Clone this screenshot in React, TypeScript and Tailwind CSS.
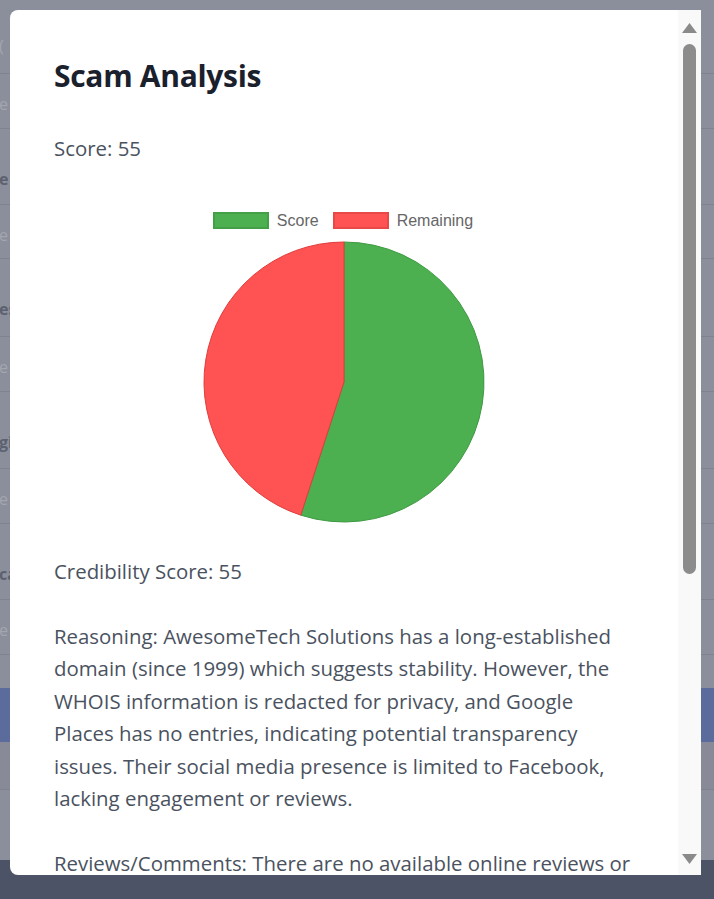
import React from "react";

// page behind the dialog (dimmed already)
const rows = [
  { h: 74, text: "(", tone: "light", top: 36 },
  { h: 55, text: "e", tone: "light", top: 20 },
  { h: 76, text: "e", tone: "bold", top: 40 },
  { h: 54, text: "e", tone: "light", top: 20 },
  { h: 78, text: "es", tone: "bold", top: 40 },
  { h: 55, text: "e", tone: "light", top: 20 },
  { h: 77, text: "gi", tone: "bold", top: 40 },
  { h: 55, text: "e", tone: "light", top: 20 },
  { h: 76, text: "ca", tone: "bold", top: 40 },
  { h: 55, text: "e", tone: "light", top: 20 },
];

function Pie() {
  // 55% score, drawn clockwise from the top
  return (
    <svg width="282" height="282" viewBox="-1 -1 282 282">
      <path
        d="M140 140 L140 0 A140 140 0 1 1 96.74 273.15 Z"
        fill="#4caf50"
        stroke="#3e9a42"
        strokeWidth="1"
      />
      <path
        d="M140 140 L96.74 273.15 A140 140 0 0 1 140 0 Z"
        fill="#ff5252"
        stroke="#e03c3c"
        strokeWidth="1"
      />
    </svg>
  );
}

function Scrollbar() {
  return (
    <div className="w-[23px] shrink-0 bg-[#f9f9f9] flex flex-col items-center pt-[13px] pb-[11px]">
      <svg width="15" height="10" viewBox="0 0 15 10">
        <polygon points="7.5,0 15,10 0,10" fill="#8a8a8a" />
      </svg>
      <div className="mt-[11px] w-[13px] h-[530px] rounded-full bg-[#8c8c8c]"></div>
      <div className="flex-1"></div>
      <svg width="15" height="10" viewBox="0 0 15 10">
        <polygon points="0,0 15,0 7.5,10" fill="#8a8a8a" />
      </svg>
    </div>
  );
}

export default function App() {
  return (
    <div className="relative w-[714px] h-[899px] overflow-hidden bg-[#8b8f9b] font-['Open_Sans',sans-serif]">
      {/* background page */}
      <div className="flex flex-col">
        {rows.map((r, i) => (
          <div
            key={i}
            style={{ height: r.h }}
            className="border-b border-[#7f838f] text-[16px] leading-[20px]"
          >
            <span
              style={{ marginTop: r.top }}
              className={`block ml-[-1px] ${
                r.tone === "bold" ? "font-bold text-[#5c6170]" : "text-[#a3a6b0]"
              }`}
            >
              {r.text}
            </span>
          </div>
        ))}
        <div className="h-[33px]"></div>
        <div className="h-[54px] bg-[#5b6b9b]"></div>
        <div className="h-[48px] border-b border-[#80838f] bg-[#888b97]"></div>
        <div className="h-[70px]"></div>
        <div className="h-[60px] bg-[#4d5366]"></div>
      </div>

      {/* dialog */}
      <div className="absolute inset-0 pl-[10px] pt-[10px]">
        <div className="w-[691px] h-[865px] bg-white rounded-l-lg flex overflow-hidden">
          <div className="flex-1 overflow-hidden pl-[44px] pr-[44px] pt-[46px] text-[#4a5260]">
            <h2 className="text-[30px] leading-[40px] font-bold tracking-[-0.3px] text-[#1a202c]">Scam Analysis</h2>
            <p className="mt-[36px] text-[20.4px] leading-[32.5px]">Score: 55</p>

            <div className="mt-[47px] flex flex-col items-center">
              <div className="flex items-center gap-[8px] font-['Liberation_Sans',Arial,sans-serif] text-[16px] leading-[17px] text-[#666]">
                <span className="w-[56px] h-[17px] bg-[#4caf50] border-2 border-[#43a047]"></span>
                <span className="mr-[6px]">Score</span>
                <span className="w-[56px] h-[17px] bg-[#ff5252] border-2 border-[#e84848]"></span>
                <span className="mr-[2px]">Remaining</span>
              </div>
              <div className="mt-[12px]">
                <Pie />
              </div>
            </div>

            <div className="mt-[32px] text-[20.4px] leading-[32.5px] whitespace-pre-wrap">
              {"Credibility Score: 55\n\nReasoning: AwesomeTech Solutions has a long-established domain (since 1999) which suggests stability. However, the WHOIS information is redacted for privacy, and Google Places has no entries, indicating potential transparency issues. Their social media presence is limited to Facebook, lacking engagement or reviews.\n\nReviews/Comments: There are no available online reviews or comments about AwesomeTech Solutions, which makes it difficult to assess customer satisfaction."}
            </div>
          </div>
          <Scrollbar />
        </div>
      </div>
    </div>
  );
}
